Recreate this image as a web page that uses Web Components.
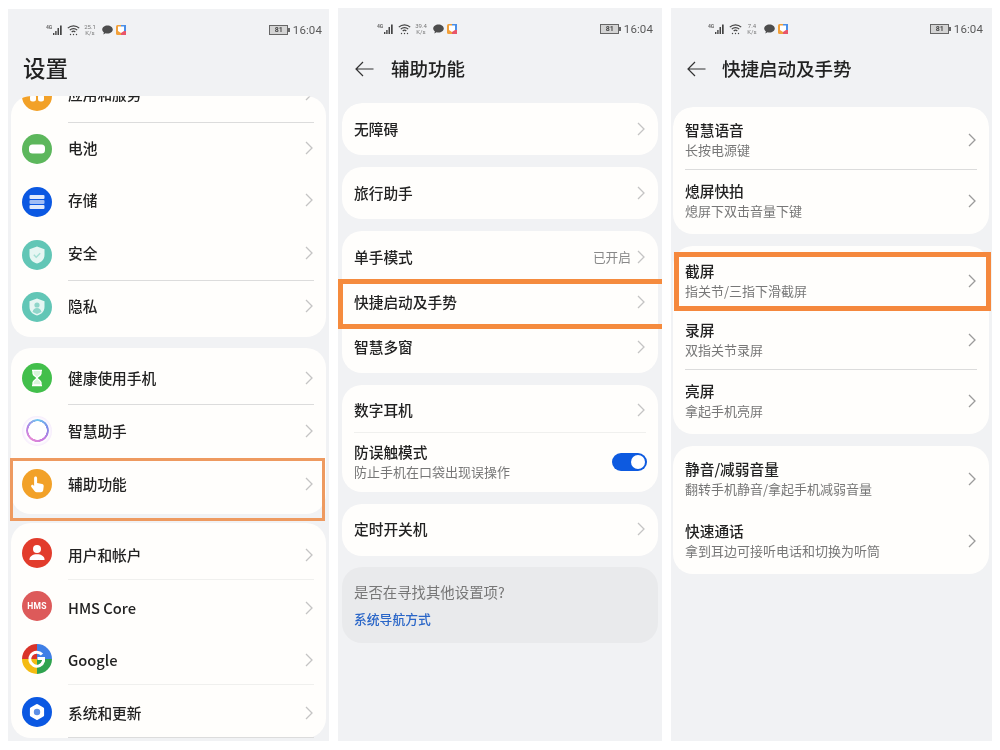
<!DOCTYPE html>
<html lang="zh-CN">
<head>
<meta charset="utf-8">
<title>设置</title>
<style>
html,body{margin:0;padding:0;background:#fff}
body{width:1000px;height:750px;overflow:hidden;font-family:"Noto Sans CJK SC","Noto Sans",sans-serif}
#page{display:flex;gap:9px;padding:8px 8px 0;height:733px;align-items:flex-start}
</style>
</head>
<body>
<div id="page">
  <phone-screen style="--w:321px;--mt:1px;--hgt:732px">
    <status-bar speed="25.1" batt="81" style="--sl:38px;--sr:7px"></status-bar>
    <page-title root>设置</page-title>
    <scroll-view style="--side:3px;--offset:-26px;--top:0px">
      <set-card style="--pb:3px;--mb:11px">
        <set-row icon style="--h:52.75px" div><app-icon slot="icon" kind="apps"></app-icon>应用和服务</set-row>
        <set-row icon style="--h:52.75px"><app-icon slot="icon" kind="battery"></app-icon>电池</set-row>
        <set-row icon style="--h:52.75px"><app-icon slot="icon" kind="storage"></app-icon>存储</set-row>
        <set-row icon style="--h:52.75px" div><app-icon slot="icon" kind="security"></app-icon>安全</set-row>
        <set-row icon style="--h:52.75px"><app-icon slot="icon" kind="privacy"></app-icon>隐私</set-row>
      </set-card>
      <set-card style="--pt:4px;--pb:4px;--mb:9px">
        <set-row icon style="--h:52.75px" div><app-icon slot="icon" kind="health"></app-icon>健康使用手机</set-row>
        <set-row icon style="--h:52.75px"><app-icon slot="icon" kind="assistant"></app-icon>智慧助手</set-row>
        <set-row icon style="--h:52.75px"><app-icon slot="icon" kind="access"></app-icon>辅助功能</set-row>
      </set-card>
      <set-card style="--pt:4px;--mb:0px">
        <set-row icon style="--h:52.75px" faint><app-icon slot="icon" kind="user"></app-icon>用户和帐户</set-row>
        <set-row icon style="--h:52.75px"><app-icon slot="icon" kind="hms"></app-icon>HMS Core</set-row>
        <set-row icon style="--h:52.75px" faint><app-icon slot="icon" kind="google"></app-icon>Google</set-row>
        <set-row icon style="--h:52.75px" div><app-icon slot="icon" kind="system"></app-icon>系统和更新</set-row>
      </set-card>
    </scroll-view>
    <mark-box slot="over" style="--l:2px;--t:449px;--bw:3px;--mw:315px;--mh:63px;--c:#ee9a60"></mark-box>
  </phone-screen>

  <phone-screen style="--w:324px;--hgt:733px">
    <status-bar speed="39.4" batt="81" style="--sl:39px;--sr:9px"></status-bar>
    <page-title style="--tl:17px">辅助功能</page-title>
    <scroll-view style="--side:4px;--offset:0px;--top:15px">
      <set-card style="--mb:12px"><set-row style="--h:52px;--pb:1px">无障碍</set-row></set-card>
      <set-card style="--mb:12px"><set-row style="--h:52px;--pb:1px">旅行助手</set-row></set-card>
      <set-card style="--mb:12px">
        <set-row style="--h:49px;--pt:3px"><span slot="value">已开启</span>单手模式</set-row>
        <set-row style="--h:44px">快捷启动及手势</set-row>
        <set-row style="--h:49px;--pb:3px">智慧多窗</set-row>
      </set-card>
      <set-card style="--mb:12px">
        <set-row style="--h:48px;--pt:3px" faint>数字耳机</set-row>
        <set-row style="--h:59px;--pb:2px">防误触模式<span slot="sub">防止手机在口袋出现误操作</span><toggle-switch slot="end"></toggle-switch></set-row>
      </set-card>
      <set-card style="--mb:11px"><set-row style="--h:52px;--pb:2px">定时开关机</set-row></set-card>
      <hint-card>是否在寻找其他设置项?<span slot="link">系统导航方式</span></hint-card>
    </scroll-view>
    <mark-box slot="over" style="--l:0px;--t:271px;--bw:5px;--mw:324px;--mh:50px;--c:#f58b3e;--br:0"></mark-box>
  </phone-screen>

  <phone-screen style="--w:321px;--hgt:733px">
    <status-bar speed="7.4" batt="81" style="--sl:37px;--sr:9px"></status-bar>
    <page-title style="--tl:16px;--ag:16px">快捷启动及手势</page-title>
    <scroll-view style="--side:2px;--offset:0px;--top:19px;--rs:3px">
      <set-card style="--mb:12px">
        <set-row two style="--h:63px;--pt:4px" div>智慧语音<span slot="sub">长按电源键</span></set-row>
        <set-row two style="--h:64px;--pb:2px">熄屏快拍<span slot="sub">熄屏下双击音量下键</span></set-row>
      </set-card>
      <set-card style="--mb:12px">
        <set-row two style="--h:66px;--pt:3px">截屏<span slot="sub">指关节/三指下滑截屏</span></set-row>
        <set-row two style="--h:58px;--pb:2px" div>录屏<span slot="sub">双指关节录屏</span></set-row>
        <set-row two style="--h:64px;--pb:3px">亮屏<span slot="sub">拿起手机亮屏</span></set-row>
      </set-card>
      <set-card>
        <set-row two style="--h:64px;--pt:2px">静音/减弱音量<span slot="sub">翻转手机静音/拿起手机减弱音量</span></set-row>
        <set-row two style="--h:64px;--pb:3px">快速通话<span slot="sub">拿到耳边可接听电话和切换为听筒</span></set-row>
      </set-card>
    </scroll-view>
    <mark-box slot="over" style="--l:3px;--t:244px;--bw:5px;--mw:317px;--mh:59px;--c:#f5883d"></mark-box>
  </phone-screen>
</div>

<script>
const shadow = (el, html) => { el.attachShadow({mode:'open'}).innerHTML = html; };

class PhoneScreen extends HTMLElement{
  constructor(){super();shadow(this,`<style>
    :host{display:block;position:relative;flex:none;width:var(--w);height:var(--hgt);margin-top:var(--mt,0);background:#f1f2f4;}
    .col{display:flex;flex-direction:column;height:100%;overflow:hidden;filter:blur(.5px)}
  </style><div class="col"><slot></slot></div><slot name="over"></slot>`);}
}
class StatusBar extends HTMLElement{
  connectedCallback(){
    if(this.shadowRoot) return;
    const s=this.getAttribute('speed'), b=this.getAttribute('batt');
    shadow(this,`<style>
      :host{display:flex;flex:none;align-items:center;height:42px;padding:0 var(--sr) 0 var(--sl);font-family:Roboto,"Noto Sans",sans-serif;color:#555}
      svg{display:block;flex:none}
      .left{display:flex;align-items:center;flex:1}
      .sp{display:flex;flex-direction:column;align-items:center;width:14px;margin:0 6px 0 3px;font-size:6px;line-height:6.5px;color:#777}
      .g{font-size:5px;font-weight:700;color:#666;align-self:flex-start;line-height:6px;width:7px}
      .bat{display:flex;align-items:center;justify-content:center;box-sizing:border-box;width:19px;height:10px;border:1px solid #666;background:#d4d4d4;font-size:7px;font-weight:700;color:#444;line-height:8px}
      .nub{width:1.5px;height:4px;background:#666;margin-right:3px;flex:none}
      .t{font-size:11.5px;letter-spacing:.1px;color:#5a5a5a}
    </style>
    <div class="left">
      <span class="g">4G</span>
      <svg width="10" height="12" viewBox="0 0 10 12"><g fill="#444"><rect x="0" y="9" width="1.4" height="2"/><rect x="2.2" y="7" width="1.4" height="4"/><rect x="4.500" y="4" width="1.500" height="7"/><rect x="7" y="1.500" width="1.700" height="9.500"/></g></svg>
      <svg style="margin-left:4px" width="13" height="12" viewBox="0 0 13 12" fill="none" stroke="#444" stroke-width="1.200"><path d="M.8 4.2a8 8 0 0 1 11.4 0M2.8 6.2a5.2 5.2 0 0 1 7.4 0M4.7 8a2.6 2.6 0 0 1 3.6 0"/><circle cx="3.5" cy="10.5" r=".7" fill="#444" stroke="none"/><circle cx="6.5" cy="10.5" r=".7" fill="#444" stroke="none"/><circle cx="9.5" cy="10.5" r=".7" fill="#444" stroke="none"/></svg>
      <div class="sp"><span>${s}</span><span>K/s</span></div>
      <svg style="margin-left:-1px" width="11" height="10" viewBox="0 0 11 10"><path d="M5.5.5C8.5.5 10.8 2.3 10.8 4.600S8.500 8.600 5.500 8.600c-.7 0-1.300-.1-1.900-.3L1.300 9.500l.6-2.100C.8 6.700.2 5.700.2 4.600.2 2.300 2.500.5 5.500.5z" fill="#4d4d4d"/></svg>
      <svg style="margin-left:3px" width="10" height="10" viewBox="0 0 10 10"><rect width="10" height="10" rx="1.500" fill="#f2a03a"/><rect x="5" width="5" height="6" fill="#4a8fe8"/><rect y="6" x="5" width="5" height="4" fill="#e8566a"/><path d="M2 1.500h6V6L5 8 2 6z" fill="#fff"/></svg>
    </div>
    <div class="bat">${b}</div><span class="nub"></span><span class="t">16:04</span>`);
  }
}
class PageTitle extends HTMLElement{
  connectedCallback(){
    if(this.shadowRoot) return;
    const root=this.hasAttribute('root');
    shadow(this,`<style>
      :host{display:flex;flex:none;align-items:center;height:${root?45:38}px;padding-left:${root?'15px':'var(--tl,18px)'};color:#222;font-size:${root?22.5:18.5}px;font-weight:500}
      svg{display:block;margin-right:var(--ag,17px);flex:none}
      span{position:relative;top:${root?-7:-1}px}
    </style>${root?'':`<svg width="19" height="16" viewBox="0 0 19 16" fill="none" stroke="#333" stroke-width="1.200"><path d="M18.500 8H1M8 1 1 8l7 7"/></svg>`}<span><slot></slot></span>`);
  }
}
class ScrollView extends HTMLElement{
  constructor(){super();shadow(this,`<style>
    :host{display:block;flex:1;min-height:0;margin:var(--top,0) var(--rs,var(--side)) 0 var(--side);overflow:hidden;border-radius:20px 20px 0 0}
    .in{margin-top:var(--offset,0)}
  </style><div class="in"><slot></slot></div>`);}
}
class SetCard extends HTMLElement{
  constructor(){super();shadow(this,`<style>
    :host{display:block;background:#fffefc;border-radius:20px;padding:var(--pt,0) 0 var(--pb,0);margin-bottom:var(--mb,0)}
  </style><slot></slot>`);}
}
class SetRow extends HTMLElement{
  connectedCallback(){
    if(this.shadowRoot) return;
    const icon=this.hasAttribute('icon'), two=this.hasAttribute('two');
    const div=this.hasAttribute('div'), faint=this.hasAttribute('faint');
    const hasEnd=!!this.querySelector('[slot=end]');
    shadow(this,`<style>
      :host{display:flex;box-sizing:border-box;height:var(--h);padding-left:${icon?11:12}px;color:#222;font-size:14.7px;font-weight:500;line-height:20px}
      .ic{display:flex;align-items:center;width:46px;flex:none}
      .body{flex:1;min-width:0;display:flex;align-items:center;margin-right:12px;box-sizing:border-box;padding:var(--pt,0) 1px var(--pb,0) 0;${div?'border-bottom:1px solid #dcdcdc;':''}${faint?'border-bottom:1px solid #f0f0ee;':''}}
      .txt{flex:1;min-width:0;display:flex;flex-direction:column}
      ::slotted([slot=sub]){display:block;font-size:13px;font-weight:400;color:#777;line-height:20px}
      ::slotted([slot=value]){font-size:12.7px;font-weight:400;color:#888;margin-right:6px}
      svg{display:block;flex:none}
    </style>
    ${icon?'<div class="ic"><slot name="icon"></slot></div>':''}
    <div class="body">
      <div class="txt"><div><slot></slot></div><slot name="sub"></slot></div>
      <slot name="value"></slot>
      <slot name="end"></slot>
      ${hasEnd?'':`<svg width="8" height="14" viewBox="0 0 8 14" fill="none" stroke="${two?'#9b9b9b':'#c4c4c4'}" stroke-width="1.300"><path d="M1 1l6 6-6 6"/></svg>`}
    </div>`);
  }
}
class ToggleSwitch extends HTMLElement{
  constructor(){super();shadow(this,`<style>
    :host{display:flex;align-items:center;justify-content:flex-end;box-sizing:border-box;width:35px;height:18px;border-radius:9px;background:#0d5ae0;padding:2px;margin-right:-2px}
    i{display:block;width:14px;height:14px;border-radius:50%;background:#fff}
  </style><i></i>`);}
}
class HintCard extends HTMLElement{
  constructor(){super();shadow(this,`<style>
    :host{display:block;box-sizing:border-box;height:76px;background:#e9eaec;border-radius:20px;padding:15px 12px 0;font-size:14.4px;color:#777;line-height:20px}
    ::slotted(span){display:block;margin-top:7px;font-size:12.8px;color:#2a66c8;font-weight:500}
  </style><slot></slot><slot name="link"></slot>`);}
}
class MarkBox extends HTMLElement{
  constructor(){super();shadow(this,`<style>
    :host{display:block;position:absolute;z-index:2;box-sizing:border-box;left:var(--l);top:var(--t);width:var(--mw);height:var(--mh);border:var(--bw) solid var(--c);border-right-width:var(--br,var(--bw));filter:blur(.4px);pointer-events:none}
  </style>`);}
}
const ICONS={
 apps:['#f2a128','<rect x="8" y="13.500" width="6" height="7" rx="2.500" fill="#fff"/><rect x="16" y="13.500" width="6" height="7" rx="2.500" fill="#fff"/>'],
 battery:['#5cb75c','<rect x="7" y="10.500" width="16" height="9" rx="3.500" fill="#fff"/>'],
 storage:['#0b58e2','<rect x="7.500" y="8" width="15" height="4" rx="1" fill="#dfe9fb"/><rect x="7.500" y="13" width="15" height="4" rx="1" fill="#9fbdf5"/><rect x="7.500" y="18" width="15" height="4" rx="1" fill="#dfe9fb"/>'],
 security:['#62c6b6','<path d="M15 6.500l7.500 2.800v5.700c0 4.300-3.100 7.400-7.500 8.500-4.400-1.100-7.500-4.200-7.500-8.500V9.300z" fill="#e6f6f3"/><path d="M11.800 14.800l2.400 2.400 4-4" fill="none" stroke="#a6dfd5" stroke-width="1.400"/>'],
 privacy:['#62c6b6','<path d="M15 6.500l7.500 2.800v5.700c0 4.300-3.100 7.400-7.500 8.500-4.400-1.100-7.500-4.200-7.500-8.500V9.300z" fill="#e6f6f3"/><circle cx="15" cy="13" r="2.600" fill="#8fd6ca"/><path d="M10.500 20c.6-2.800 2.300-4 4.500-4s3.900 1.200 4.500 4l-4.500 2z" fill="#8fd6ca"/>'],
 health:['#42bf4b','<path d="M10 7.500h10M10 22.500h10" stroke="#fff" stroke-width="1.700"/><path d="M11 8v2.500c0 2 4 3.500 4 4.500s-4 2.500-4 4.500V22h8v-2.500c0-2-4-3.500-4-4.500s4-2.500 4-4.500V8" fill="#d8f5da" stroke="#fff" stroke-width="1.300"/>'],
 access:['#f2a128','<path d="M13.600 7.500c.9 0 1.500.6 1.500 1.500v5l5 1c1.100.3 1.700 1.100 1.600 2.200l-.5 4.100c-.2 1.200-1.100 2-2.300 2h-4.200c-.8 0-1.500-.3-2-1l-3.300-4.200c-.5-.7-.4-1.500.2-2 .6-.4 1.300-.4 1.800.1l.7.700V9c0-.9.600-1.500 1.500-1.500z" fill="#fff"/>'],
 user:['#e23c2c','<circle cx="15" cy="11" r="4" fill="#fff"/><path d="M7.500 21.500c0-3.200 3.300-5.200 7.500-5.200s7.500 2 7.500 5.200v.5h-15z" fill="#fff"/>'],
 system:['#0b58e2','<path d="M15 8.500l5.600 3.250v6.500L15 21.500l-5.600-3.250v-6.500z" fill="#fff" stroke="#fff" stroke-width="3" stroke-linejoin="round"/><circle cx="15" cy="15" r="3.200" fill="#5d8fe6"/>']
};
class AppIcon extends HTMLElement{
  connectedCallback(){
    if(this.shadowRoot) return;
    const k=this.getAttribute('kind');
    let inner;
    if(k==='hms'){
      inner=`<div class="hms">HMS</div>`;
    }else if(k==='google'){
      inner=`<div class="g"><svg width="30" height="30" viewBox="0 0 30 30"><path d="M20 10.500a7 7 0 1 0 1.500 6.500V14.500H15.500" fill="none" stroke="#fff" stroke-width="3"/></svg></div>`;
    }else if(k==='assistant'){
      inner=`<div class="as"><i></i></div>`;
    }else{
      const [c,s]=ICONS[k];
      inner=`<svg width="30" height="30" viewBox="0 0 30 30"><circle cx="15" cy="15" r="15" fill="${c}"/>${s}</svg>`;
    }
    shadow(this,`<style>
      :host{display:block;width:30px;height:30px;flex:none}
      svg{display:block}
      .hms{width:30px;height:30px;border-radius:50%;background:#dd5a5a;color:#fff;font:700 8.500px/30px Roboto,sans-serif;text-align:center;letter-spacing:.3px}
      .g{width:30px;height:30px;border-radius:50%;background:conic-gradient(#3f7fe6 0 90deg,#2fa34f 90deg 180deg,#f4bb12 180deg 270deg,#d9332a 270deg 360deg)}
      .as{width:30px;height:30px;border-radius:50%;display:flex;align-items:center;justify-content:center;background:radial-gradient(circle,#fff 55%,#f3e6fb 75%,#fffefc 100%)}
      .as i{box-sizing:border-box;width:23px;height:23px;border-radius:50%;background:conic-gradient(#6ec6f0,#7e8de8,#c77be0,#e48ad6,#b884e4,#6ec6f0);-webkit-mask:radial-gradient(circle,transparent 9px,#000 9.500px);mask:radial-gradient(circle,transparent 9px,#000 9.500px)}
    </style>${inner}`);
  }
}
customElements.define('phone-screen',PhoneScreen);
customElements.define('status-bar',StatusBar);
customElements.define('page-title',PageTitle);
customElements.define('scroll-view',ScrollView);
customElements.define('set-card',SetCard);
customElements.define('set-row',SetRow);
customElements.define('toggle-switch',ToggleSwitch);
customElements.define('hint-card',HintCard);
customElements.define('mark-box',MarkBox);
customElements.define('app-icon',AppIcon);
</script>
</body>
</html>
